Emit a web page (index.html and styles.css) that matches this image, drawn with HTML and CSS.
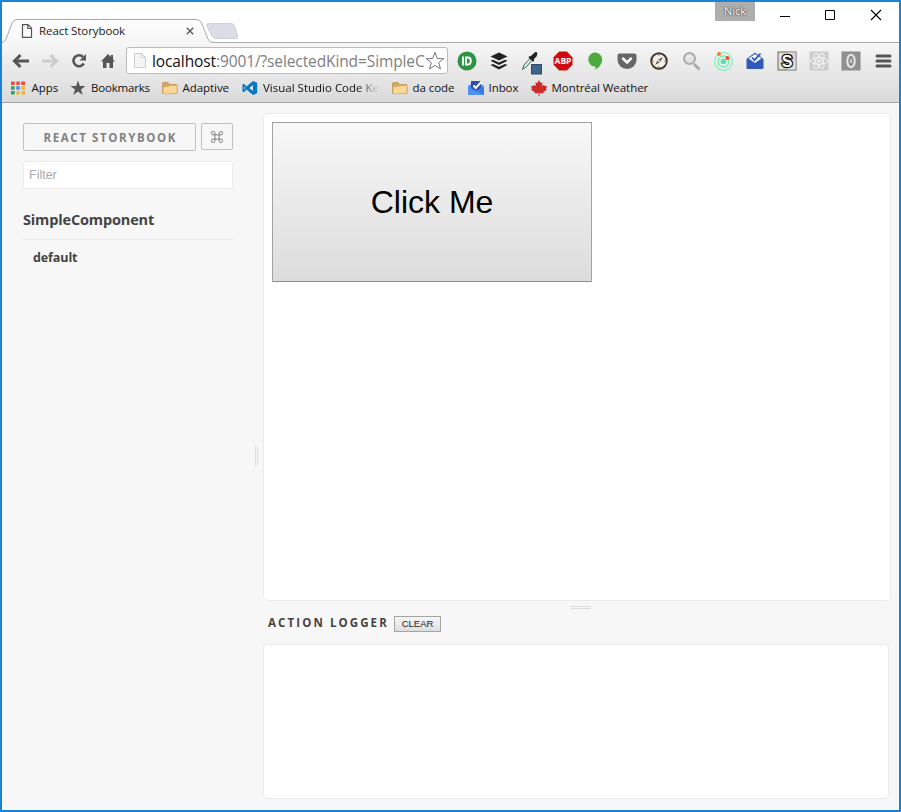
FILE: index.html
```html
<!DOCTYPE html>
<html lang="en">
<head>
<meta charset="utf-8">
<title>React Storybook</title>
<link rel="stylesheet" href="styles.css">
</head>
<body>
<div class="window">
  <header class="titlebar">
    <div class="tabs">
      <svg class="tab-shape" width="240" height="26" viewBox="0 0 240 26">
        <defs><linearGradient id="tab" x1="0" y1="0" x2="0" y2="1"><stop offset="0" stop-color="#fdfdfd"/><stop offset="1" stop-color="#f6f6f6"/></linearGradient></defs>
        <path d="M207 6.500H229Q231.500 6.500 232.500 9L235.500 19Q236 21.500 234 21.500H214Q210.500 21.500 209.500 18.500L205 9Q204 6.500 207 6.500Z" fill="#d9dde5" stroke="#cdd0d6"/>
        <path d="M0 25.500Q3 25 4 22L10 6Q11.500 2.500 15 2.500H194Q198 2.500 199.500 6L206 22Q207.500 25 211 25.500V27H0Z" fill="url(#tab)"/>
        <path d="M0 25.500Q3 25 4 22L10 6Q11.500 2.500 15 2.500H194Q198 2.500 199.500 6L206 22Q207.500 25.500 211 25.500H240" fill="none" stroke="#aaa"/>
      </svg>
      <div class="tab">
        <svg width="12" height="14" viewBox="0 0 12 14"><path d="M1.500.7H7L10.500 4.200V13.300H1.500ZM6.800.7V4.500H10.500" fill="#fff" stroke="#555" stroke-width="1.200"/></svg>
        <span class="tab-title">React Storybook</span>
        <svg width="8" height="8" viewBox="0 0 8 8"><path d="M.8.8 7.200 7.200M7.200.8.8 7.200" stroke="#555" stroke-width="1.300"/></svg>
      </div>
    </div>
    <div class="user">Nick</div>
    <div class="controls">
      <svg width="12" height="12" viewBox="0 0 12 12"><path d="M1 7.500H11" stroke="#000"/></svg>
      <svg width="12" height="12" viewBox="0 0 12 12"><path d="M1.500 1.500H10.500V10.500H1.500Z" fill="none" stroke="#000"/></svg>
      <svg width="12" height="12" viewBox="0 0 12 12"><path d="M1 1 11 11M11 1 1 11" stroke="#000" stroke-width="1.100"/></svg>
    </div>
  </header>
  <div class="chrome">
    <div class="toolbar">
      <nav class="nav">
        <svg width="18" height="16" viewBox="0 0 18 16"><path d="M17 8H3M8.500 2 2.500 8 8.500 14" fill="none" stroke="#555" stroke-width="3"/></svg>
        <svg width="18" height="16" viewBox="0 0 18 16"><path d="M1 8H15M9.500 2 15.500 8 9.500 14" fill="none" stroke="#ccc" stroke-width="3"/></svg>
        <svg width="16" height="16" viewBox="0 0 16 16"><path d="M12.800 10.500A5.500 5.500 0 1 1 12 4" fill="none" stroke="#555" stroke-width="2.600"/><path d="M15 1V7.500H8.500Z" fill="#555"/></svg>
        <svg width="16" height="16" viewBox="0 0 16 16"><path d="M8 1 1 8.500H3V15H6.500V10H9.500V15H13V8.500H15L13 6.300V2H10.800V4Z" fill="#555"/></svg>
      </nav>
      <div class="omnibox">
        <svg width="12" height="15" viewBox="0 0 12 15"><path d="M.5.500H7.500L11.500 4.500V14.500H.5ZM7.500.5V4.500H11.500" fill="#f5f5f5" stroke="#ccc"/></svg>
        <span class="url"><span class="host">localhost</span>:9001/?selectedKind=SimpleC</span>
        <svg class="star" width="20" height="20" viewBox="0 0 20 20"><path d="M10 1.300 12.300 7.500 18.700 7.700 13.700 11.700 15.500 18 10 14.400 4.500 18 6.300 11.700 1.300 7.700 7.700 7.500Z" fill="#fff" stroke="#777" stroke-width="1"/></svg>
      </div>
      <div class="extensions">
        <svg viewBox="0 0 20 20"><circle cx="10" cy="10" r="9.500" fill="#2d9445"/><path d="M6 5.500V14.500M9 6.500H11Q13.800 6.500 13.800 10T11 13.500H9Z" fill="none" stroke="#fff" stroke-width="1.900"/></svg>
        <svg viewBox="0 0 20 20" fill="#222"><path d="M10 1.500 18.500 5.500 10 9.500 1.500 5.500Z"/><path d="M1.500 9.800 4 8.700 10 11.500 16 8.700 18.500 9.800 10 14Z"/><path d="M1.500 14.100 4 13 10 15.800 16 13 18.500 14.100 10 18.400Z"/></svg>
        <svg viewBox="0 0 20 20"><path d="M1.500 18.500 3 14 9 7.500 11 9.500 5 16Z" fill="#dff0e4" stroke="#38664d"/><path d="M8 5.500 10 5 12.500 2.500Q15 .2 16 1.500T15.500 5.500L13 8 13 10 12 10.700 7.500 6.500Z" fill="#222"/><rect x="10.500" y="13.500" width="10" height="9.500" fill="#426488" stroke="#294d73"/></svg>
        <svg viewBox="0 0 20 20"><path d="M6.200.5H13.800L19.500 6.200V13.800L13.800 19.500H6.200L.5 13.800V6.200Z" fill="#cf0b12"/><text x="10" y="13.200" class="abp">ABP</text></svg>
        <svg viewBox="0 0 20 20"><path d="M10 1.500A7.200 7.200 0 0 1 17.200 8.500C17.200 13 14 16.500 10.500 18.700V15.500A7 7 0 1 1 10 1.500Z" fill="#4cab3c"/></svg>
        <svg viewBox="0 0 20 20"><path d="M2.500 2.500H17.500Q19.500 2.500 19.500 4.500V9A9.500 9 0 0 1 .5 9V4.500Q.5 2.500 2.500 2.500Z" fill="#666"/><path d="M6 7.500 10 11.400 14 7.500" fill="none" stroke="#fff" stroke-width="2.500" stroke-linecap="round"/></svg>
        <svg viewBox="0 0 20 20"><circle cx="10" cy="10" r="7.800" fill="#f3efe9" stroke="#44362c" stroke-width="1.900"/><path d="M14 6 11 11 6 14 9 9Z" fill="#544437"/><path d="M10 3V5M10 15V17M3 10H5M15 10H17" stroke="#8a8178"/><circle cx="10" cy="10" r="1" fill="#fff"/></svg>
        <svg viewBox="0 0 20 20"><path d="M13 13 18.500 18.500" stroke="#aaa" stroke-width="3"/><circle cx="8.500" cy="7.500" r="5.500" fill="#e3e3e3" stroke="#aaa" stroke-width="2"/><path d="M6 7Q7 4.500 9 5" fill="none" stroke="#fff"/></svg>
        <svg viewBox="0 0 20 20"><g fill="none" stroke="#70edae"><circle cx="10.500" cy="10.500" r="8.900"/><circle cx="10.500" cy="10.500" r="5.500" stroke-width="1.300"/></g><circle cx="10.500" cy="10.500" r="2.800" fill="#52e4ae"/><circle cx="6" cy="3" r="2" fill="#ff7733"/><circle cx="14.500" cy="7" r="2" fill="#f34a2b"/></svg>
        <svg viewBox="0 0 20 20"><path d="M1.500 8 10 1.500 18.500 8V17Q18.500 18 17.500 18H2.500Q1.500 18 1.500 17Z" fill="#3159b8"/><path d="M3.500 7.500 10 3 16.500 7.500 10 12Z" fill="#f6f8ff"/><path d="M7 6.500 9.500 9.200 15.500 2.500" fill="none" stroke="#3159b8" stroke-width="1.800"/></svg>
        <svg viewBox="0 0 20 20"><rect x="1" y="1" width="18" height="18" fill="#e4ddd3" stroke="#666"/><path d="M10 1.500H18.500V10H10Z" fill="#edcfcb"/><path d="M10 10H18.500V18.500H10Z" fill="#d5e2dc"/><text x="10" y="15.700" class="stylish">S</text></svg>
        <svg viewBox="0 0 20 20"><rect x=".5" y=".5" width="19" height="19" fill="#ccc"/><g fill="none" stroke="#f5f5f5"><ellipse cx="10" cy="10" rx="8.500" ry="3.300"/><ellipse cx="10" cy="10" rx="8.500" ry="3.300" transform="rotate(60 10 10)"/><ellipse cx="10" cy="10" rx="8.500" ry="3.300" transform="rotate(120 10 10)"/></g><circle cx="10" cy="10" r="1.500" fill="#fff"/></svg>
        <svg viewBox="0 0 20 20"><rect x=".5" y=".5" width="19" height="19" fill="#8c8c8c"/><path d="M2 3H18M2 6H18M2 9H18M2 12H18M2 15H18M2 18H18" stroke="#a2a2a2" stroke-dasharray="1 1"/><ellipse cx="10" cy="10" rx="3.700" ry="6.200" fill="#8c8c8c" stroke="#e6e6e6" stroke-width="2"/><path d="M10 8V12" stroke="#ddd" stroke-width="1.500"/></svg>
        <svg viewBox="0 0 20 20"><path d="M4 5H17M4 10H17M4 15H17" stroke="#555" stroke-width="3" stroke-linecap="round"/></svg>
      </div>
    </div>
    <div class="bookmarks">
      <div><svg viewBox="0 0 16 16"><path d="M0 1.500H4V5H0ZM5 1.500H9V5H5ZM10 1.500H14V5H10Z" fill="#ed4b3e"/><path d="M0 6.200H4V9.700H0ZM0 11H4V14.500H0Z" fill="#34a462"/><path d="M5 6.200H9V9.700H5Z" fill="#4688f1"/><path d="M5 11H9V14.500H5ZM10 6.200H14V9.700H10ZM10 11H14V14.500H10Z" fill="#f6b330"/><path d="M4.500 1V15M9.500 1V15" stroke="#e3e3e3" stroke-width="1.600"/></svg><span>Apps</span></div>
      <div><svg viewBox="0 0 16 16"><path d="M7 .5 8.900 6H14.500L10 9.500 11.700 15 7 11.600 2.300 15 4 9.500-.5 6H5.100Z" fill="#555"/></svg><span>Bookmarks</span></div>
      <div><svg viewBox="0 0 16 16"><use href="#folder"/></svg><span>Adaptive</span></div>
      <div><svg viewBox="0 0 16 16"><path d="M11 1 15.200 2.700V13.300L11 15 4.500 9.500 2 12.200.5 11.400V4.600L2 3.800 4.500 6.500Z" fill="#0078cc"/><path d="M11 5V11L7.300 8ZM2 6.500V9.500L3.200 8Z" fill="#e6e6e6"/></svg><span class="fade">Visual Studio Code Ke</span></div>
      <div><svg viewBox="0 0 16 16"><g id="folder"><path d="M.5 13.500V3.500Q.5 2.500 1.500 2.500H6L7.500 4.500H14Q15 4.500 15 5.500V13.500Z" fill="#d9a760" stroke="#bf914f" stroke-width=".8"/><path d="M1 14V7L6 6.500 8 5.500H15V13.500Z" fill="#f9d798" stroke="#d3a662" stroke-width=".6"/></g></svg><span>da code</span></div>
      <div><svg viewBox="0 0 16 16"><path d="M0 6 3 4V1H13V4L16 6V15H0Z" fill="#4e91f4"/><path d="M3 1H13V9L8 12 3 9Z" fill="#2c50b0"/><path d="M5.500 5.500 7.700 8 13.500 1.800" fill="none" stroke="#fff" stroke-width="2"/><path d="M0 6.500 8 11 16 6.500V15H0Z" fill="#4e91f4"/><path d="M16 6.500V15L8 11Z" fill="#3679df"/></svg><span>Inbox</span></div>
      <div><svg viewBox="0 0 16 16"><path d="M8 0 9.700 3 11.500 2.300 11 6 13 4.800 13.600 6H16L15 8.500 16 9.500 12 12.500V13.500L8.500 13V16H7.500V13L4 13.500V12.500L0 9.500 1 8.500 0 6H2.400L3 4.800 5 6 4.500 2.300 6.300 3Z" fill="#cd2a2c"/></svg><span>Montréal Weather</span></div>
    </div>
  </div>
  <main class="storybook">
    <aside class="sidebar">
      <div class="brand">
        <a class="brand-name">REACT STORYBOOK</a>
        <button class="shortcut" aria-label="Shortcuts"><svg width="12" height="12" viewBox="0 0 14 14"><path d="M4.500 4.500H9.500V9.500H4.500ZM4.500 4.500H3A2 2 0 1 1 4.500 3ZM9.500 4.500V3A2 2 0 1 1 11 4.500ZM9.500 9.500H11A2 2 0 1 1 9.500 11ZM4.500 9.500V11A2 2 0 1 1 3 9.500Z" fill="none" stroke="#777" stroke-width="1.100"/></svg></button>
      </div>
      <input class="filter" placeholder="Filter">
      <div class="kind">SimpleComponent</div>
      <div class="story">default</div>
    </aside>
    <div class="v-split"><i></i></div>
    <section class="content">
      <div class="preview"><button class="big">Click Me</button></div>
      <div class="h-split"><i></i></div>
      <div class="logger-head"><span>ACTION LOGGER</span><button class="clear">CLEAR</button></div>
      <div class="logger"></div>
    </section>
  </main>
</div>
</body>
</html>
```
FILE: styles.css
```css
* { box-sizing: border-box; }
body { margin: 0; font-family: "Open Sans", "Noto Sans", sans-serif; }
svg { display: block; flex: none; overflow: visible; }
.window { width: 901px; height: 812px; border: 2px solid #1883d7; display: flex; flex-direction: column; background: #f7f7f7; overflow: hidden; }
.titlebar { height: 41px; background: #fff; display: flex; align-items: flex-start; border-bottom: 1px solid #aaa; flex: none; }
.tabs { width: 240px; height: 41px; padding-top: 15px; position: relative; z-index: 1; flex: none; }
.tab { position: absolute; left: 19px; top: 22px; display: flex; align-items: center; height: 14px; }
.tab-title { font-size: 11.5px; width: 152px; margin-left: 6px; margin-right: -5px; letter-spacing: -.08px; color: #222; white-space: nowrap; position: relative; top: -1px; }
.user { margin-left: 473px; width: 40px; height: 19px; background: #aeaeae; color: #fff; font-size: 11px; line-height: 18px; text-align: center; text-shadow: 0 0 1px #333, 0 0 2px #333; }
.controls { display: flex; gap: 33px; margin: 7px 0 0 24px; }
.controls svg:last-child { margin-left: 1px; }
.chrome { height: 60px; background: linear-gradient(#f6f6f6, #dadada); border-bottom: 1px solid #a5a5a5; flex: none; }
.toolbar { height: 35px; display: flex; align-items: center; }
.nav { display: grid; grid-template-columns: repeat(4, 29px); justify-items: center; align-items: center; margin-left: 4px; }
.omnibox { margin-left: 4px; width: 322px; height: 27px; border: 1px solid #bbb; border-radius: 3px; background: #fff; display: flex; align-items: center; padding-left: 7px; flex: none; }
.url { font-size: 15.500px; margin-left: 6px; width: 273px; color: #808080; white-space: nowrap; line-height: 24px; letter-spacing: -.11px; }
.host { color: #111; }
.extensions { display: grid; grid-template-columns: repeat(14, 32px); justify-items: center; margin-left: 2.500px; flex: none; }
.extensions svg { width: 20px; height: 20px; }
.abp { font: bold 8.500px "Open Sans", sans-serif; fill: #fff; text-anchor: middle; }
.stylish { font: bold 16px "Liberation Sans", sans-serif; fill: #fff; stroke: #111; stroke-width: 2.500px; paint-order: stroke; text-anchor: middle; }
.bookmarks { display: grid; grid-template-columns: 60px 91px 80px 150px 76px 63px 130px; padding-left: 9px; height: 20px; align-items: center; font-size: 11.500px; line-height: 18px; letter-spacing: -.06px; color: #111; }
.bookmarks div { display: flex; align-items: center; gap: 4.500px; white-space: nowrap; }
.bookmarks div:nth-child(2) { letter-spacing: -.2px; gap: 4px; }
.bookmarks div:nth-child(4) { letter-spacing: 0; gap: 5px; }
.bookmarks svg { width: 16px; height: 16px; }
.fade { width: 116px; overflow: hidden; -webkit-mask-image: linear-gradient(90deg, #000 82%, transparent); mask-image: linear-gradient(90deg, #000 82%, transparent); }
.storybook { flex: 1; display: flex; color: #444; }
.sidebar { width: 231px; padding: 20px 0 0 21px; flex: none; }
.brand { display: flex; justify-content: space-between; align-items: flex-start; }
.brand-name { width: 173px; height: 28px; border: 1px solid #c1c1c1; border-radius: 2px; font-size: 11.500px; font-weight: 700; letter-spacing: 1.600px; line-height: 28px; padding-left: 1.500px; text-align: center; color: #828282; white-space: nowrap; }
.shortcut { width: 32px; height: 27px; border: 1px solid #c1c1c1; border-radius: 2px; background: transparent; padding: 0; display: grid; place-items: center; }
.filter { display: block; width: 210px; height: 28px; margin-top: 10px; border: 1px solid #ececec; border-radius: 2px; padding: 0 5px; font: 12.500px "Liberation Sans", sans-serif; background: #fff; }
.filter::placeholder { color: #aaa; opacity: 1; }
.kind { height: 51px; padding-top: 20px; border-bottom: 1px solid #eaeaea; font-size: 14.500px; line-height: 22px; font-weight: 700; letter-spacing: -.15px; }
.story { padding: 8px 0 0 10px; font-size: 12.500px; line-height: 20px; font-weight: 700; letter-spacing: -.1px; }
.v-split { width: 30px; padding: 343px 0 0 22px; flex: none; }
.v-split i { display: block; width: 3px; height: 20px; border: solid #dedede; border-width: 0 1px; }
.content { width: 628px; padding-top: 10px; }
.preview { height: 488px; border: 1px solid #ececec; border-radius: 4px; background: #fff; padding: 8px; }
.big { display: block; width: 320px; height: 160px; border: 1px solid #a3a3a3; border-bottom-color: #8d8d8d; border-radius: 1px; background: linear-gradient(#f8f8f8, #dcdcdc); font: 32px "Liberation Sans", sans-serif; color: #000; padding: 0; }
.h-split { height: 15px; padding: 5px 0 0 308px; }
.h-split i { display: block; width: 20px; height: 3px; border: solid #dedede; border-width: 1px 0; }
.logger-head { height: 28px; display: flex; align-items: flex-start; padding-left: 5px; font-size: 11.500px; font-weight: 700; letter-spacing: 2.100px; line-height: 14px; white-space: nowrap; }
.logger-head span { width: 126px; }
.clear { width: 47px; height: 16px; border: 1px solid #a5a5a5; background: linear-gradient(#f6f6f6, #dedede); padding: 0; font: 9.500px/14px "Liberation Sans", sans-serif; color: #222; }
.logger { width: 626px; height: 155px; border: 1px solid #ececec; border-radius: 4px; background: #fff; }
```
